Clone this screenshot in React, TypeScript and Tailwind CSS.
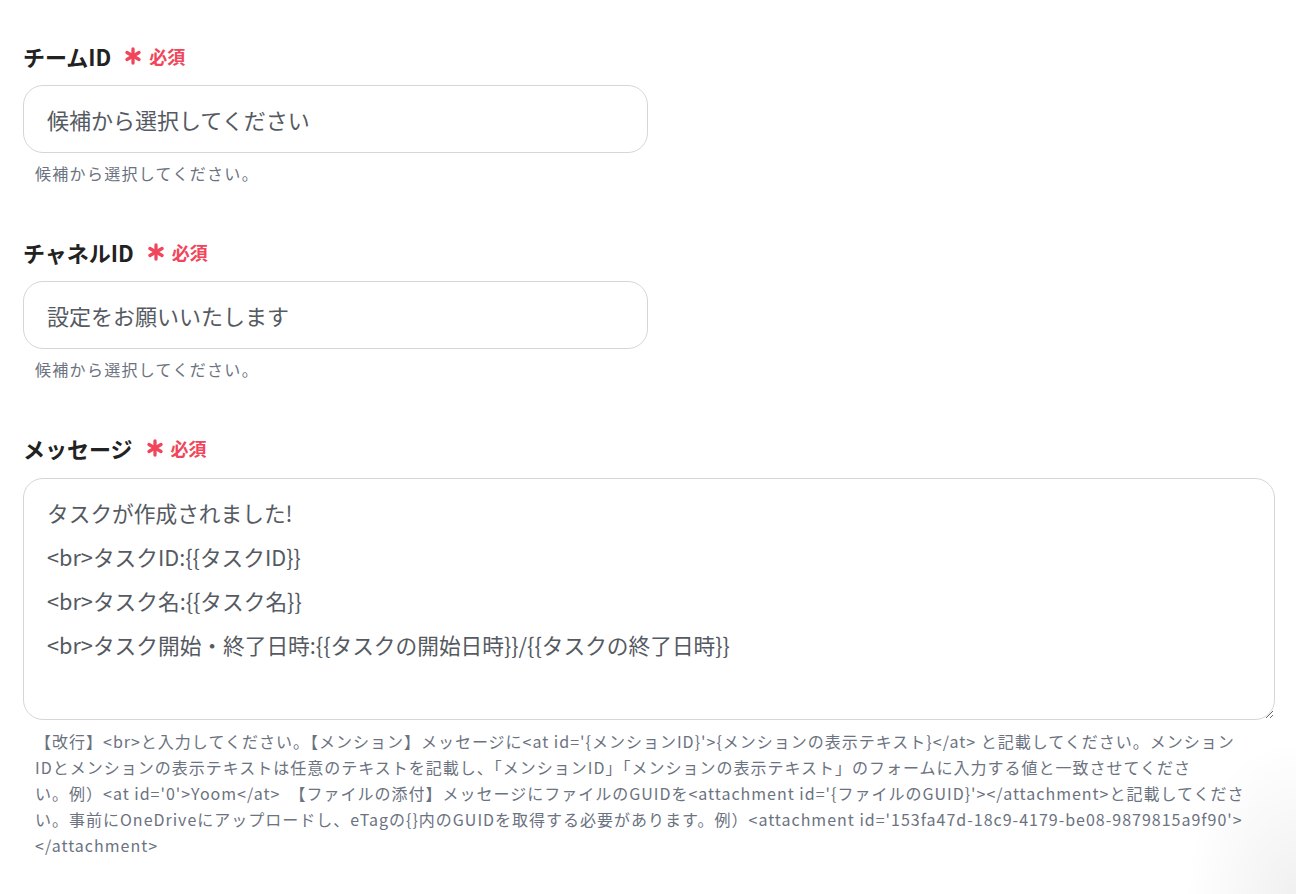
import React from 'react';
import { Asterisk } from 'lucide-react';

const fontStack = '"Noto Sans CJK JP", "Noto Sans", sans-serif';

interface FieldLabelProps {
    label: string;
}

const FieldLabel: React.FC<FieldLabelProps> = ({ label }) => (
    <div className="flex items-center h-7">
        <span className="text-[22px] font-bold text-[#222] leading-7">{label}</span>
        <Asterisk size={28} strokeWidth={2.8} className="ml-2 text-[#f0455a]" />
        <span className="ml-0.5 text-[18px] font-bold text-[#f0455a] leading-7">必須</span>
    </div>
);

const Helper: React.FC<{ children: React.ReactNode }> = ({ children }) => (
    <p className="mt-2.5 px-3 text-[16px] tracking-[1.3px] leading-5 text-[#6b7280]">{children}</p>
);

const messageDefault = [
    'タスクが作成されました!',
    '<br>タスクID:{{タスクID}}',
    '<br>タスク名:{{タスク名}}',
    '<br>タスク開始・終了日時:{{タスクの開始日時}}/{{タスクの終了日時}}',
].join('\n');

const App: React.FC = () => {
    return (
        <div className="min-h-screen bg-white relative overflow-hidden" style={{ fontFamily: fontStack }}>
            <div className="pl-[23px] pr-[21px] pt-[42px] pb-10">
                {/* チームID */}
                <section>
                    <FieldLabel label="チームID" />
                    <div className="mt-[15px] w-[625px] h-[68px] rounded-[20px] border border-[#d4d6dc] flex items-center px-[23px]">
                        <span className="text-[22px] text-[#555a62]">候補から選択してください</span>
                    </div>
                    <Helper>候補から選択してください。</Helper>
                </section>

                {/* チャネルID */}
                <section className="mt-[55px]">
                    <FieldLabel label="チャネルID" />
                    <div className="mt-[15px] w-[625px] h-[68px] rounded-[20px] border border-[#d4d6dc] flex items-center px-[23px]">
                        <span className="text-[22px] text-[#555a62]">設定をお願いいたします</span>
                    </div>
                    <Helper>候補から選択してください。</Helper>
                </section>

                {/* メッセージ */}
                <section className="mt-[55px]">
                    <FieldLabel label="メッセージ" />
                    <textarea
                        className="mt-[16px] block w-full h-[242px] rounded-[20px] border border-[#d4d6dc] px-[23px] pt-3 text-[21.7px] leading-[44px] text-[#555a62] outline-none"
                        defaultValue={messageDefault}
                    />
                    <p className="mt-2 px-3 text-[16px] tracking-[1px] leading-[26px] text-[#6b7280] whitespace-nowrap">
                        【改行】&lt;br&gt;と入力してください。【メンション】メッセージに&lt;at id='{'{'}メンションID{'}'}'&gt;{'{'}メンションの表示テキスト{'}'}&lt;/at&gt; と記載してください。メンション<br />
                        IDとメンションの表示テキストは任意のテキストを記載し、「メンションID」「メンションの表示テキスト」のフォームに入力する値と一致させてくださ<br />
                        い。例）&lt;at id='0'&gt;Yoom&lt;/at&gt;　【ファイルの添付】メッセージにファイルのGUIDを&lt;attachment id='{'{'}ファイルのGUID{'}'}'&gt;&lt;/attachment&gt;と記載してくださ<br />
                        い。事前にOneDriveにアップロードし、eTagの{'{}'}内のGUIDを取得する必要があります。例）&lt;attachment id='153fa47d-18c9-4179-be08-9879815a9f90'&gt;<br />
                        &lt;/attachment&gt;
                    </p>
                </section>
            </div>

            {/* faint shade from an off-screen floating element */}
            <div className="pointer-events-none absolute right-0 bottom-0 w-28 h-40 bg-[radial-gradient(ellipse_at_100%_100%,rgba(0,0,0,0.06),transparent_70%)]" />
        </div>
    );
};

export default App;
